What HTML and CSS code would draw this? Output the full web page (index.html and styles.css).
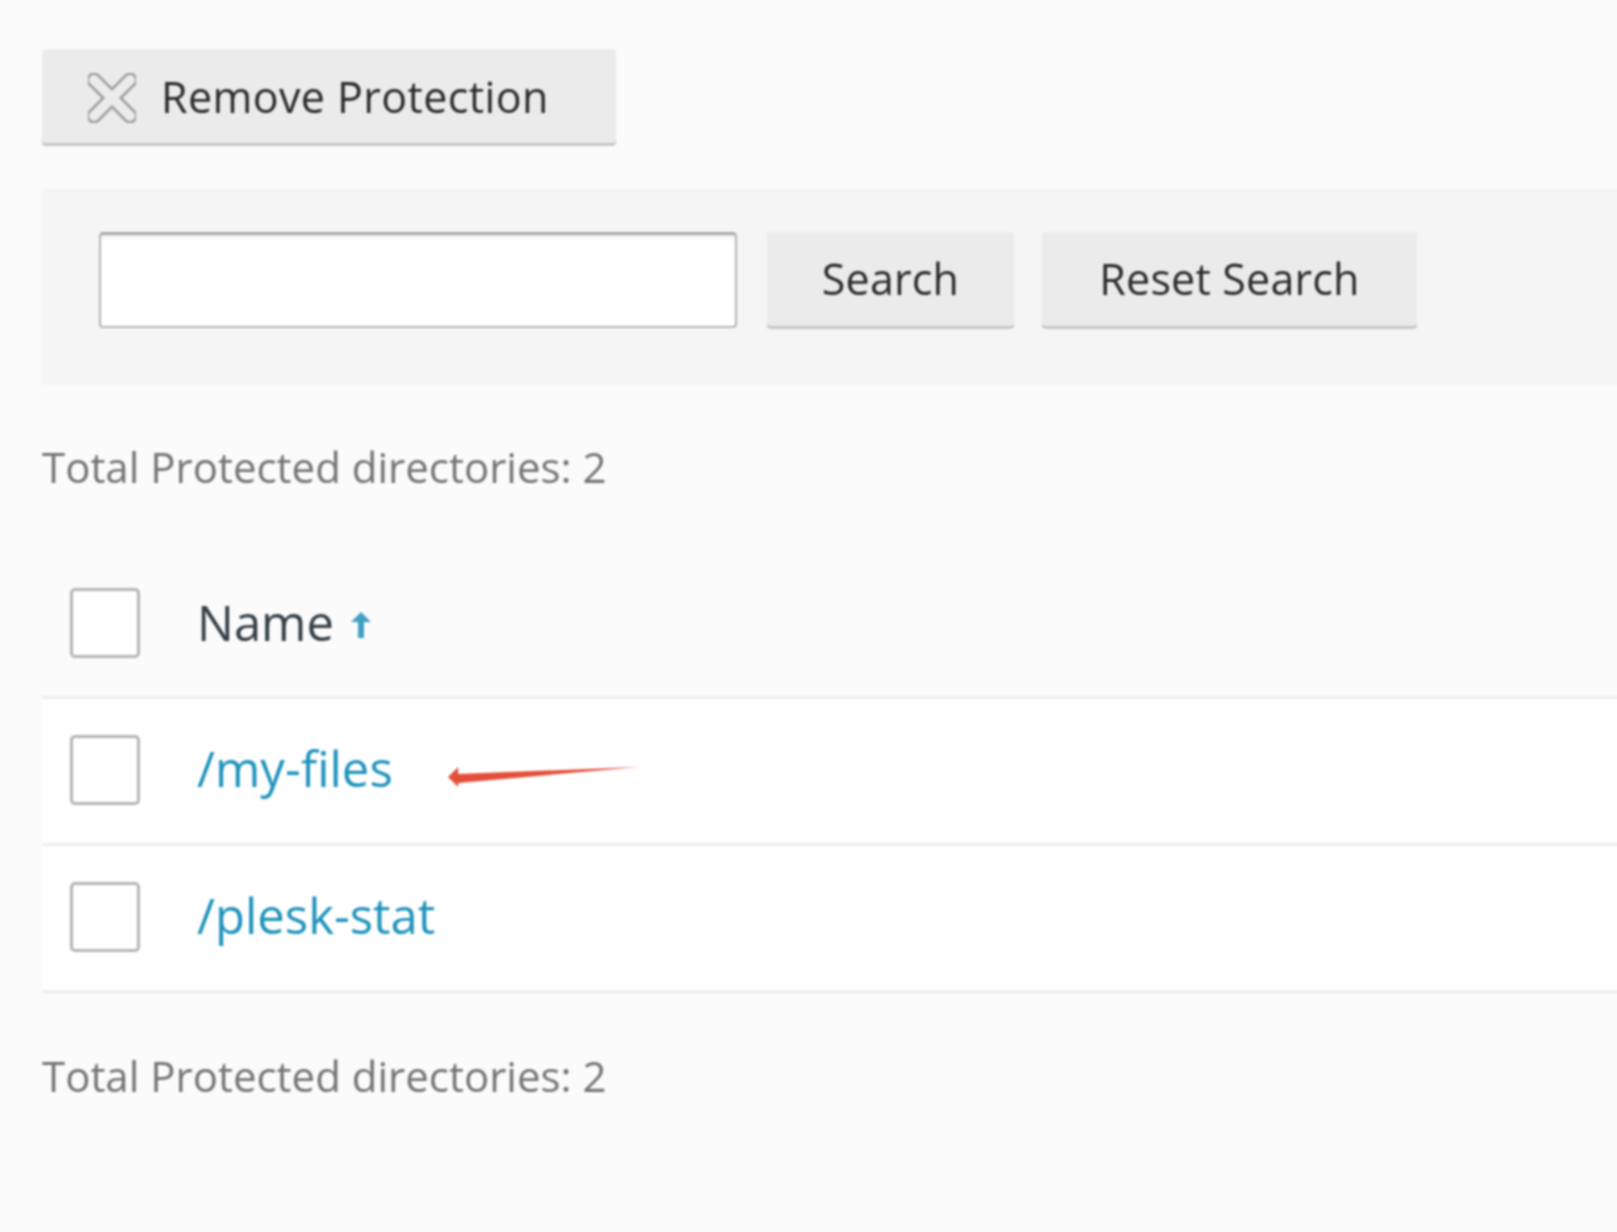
FILE: index.html
```html
<!DOCTYPE html>
<html lang="en">
<head>
  <meta charset="UTF-8" />
  <title>Protected directories</title>
  <link rel="stylesheet" href="styles.css">
</head>
<body>
  <div class="page">
    <div class="toolbar">
      <button class="btn btn-remove">
        <svg class="icon-remove" viewBox="0 0 48 50" width="48" height="50">
          <path class="cross-outer" d="M6 7 L42 43 M42 7 L6 43" />
          <path class="cross-inner" d="M6 7 L42 43 M42 7 L6 43" />
        </svg>
        Remove Protection
      </button>
    </div>

    <div class="search-panel">
      <input type="text" class="search-input" />
      <button class="btn btn-search">Search</button>
      <button class="btn btn-reset">Reset Search</button>
    </div>

    <div class="total total-top">Total Protected directories: 2</div>

    <div class="list">
      <div class="row row-head">
        <span class="check"></span>
        <span class="head-name">Name</span>
        <svg class="sort-arrow" viewBox="0 0 20 28" width="20" height="28">
          <path d="M10 1 L20 11 H13 V27 H7 V11 H0 Z" />
        </svg>
      </div>
      <div class="row row-item">
        <span class="check"></span>
        <a class="dir-link" href="#">/my-files</a>
        <svg class="red-arrow" viewBox="0 0 188 20" width="191" height="20" preserveAspectRatio="none">
          <path d="M0 10 L10 0 L10 7 L188 0 L10 16 L10 20 Z" />
        </svg>
      </div>
      <div class="row row-item">
        <span class="check"></span>
        <a class="dir-link" href="#">/plesk-stat</a>
      </div>
    </div>

    <div class="total total-bottom">Total Protected directories: 2</div>
  </div>
</body>
</html>
```

FILE: styles.css
```css
html, body {
  margin: 0;
  padding: 0;
  height: 100%;
  background: #fbfbfb;
  font-family: "Open Sans", sans-serif;
  overflow: hidden;
}

.page {
  padding: 49px 0 0 42px;
  margin-right: -10px;
  filter: blur(0.9px);
}

.toolbar {
  margin-bottom: 46px;
}

.btn {
  font-family: "Open Sans", sans-serif;
  font-size: 43px;
  font-weight: 500;
  letter-spacing: 0.2px;
  color: #2b2b2b;
  background: #ebebeb;
  border: none;
  border-radius: 4px;
  box-shadow: 0 3px 0 #c6c6c6;
  height: 94px;
  padding: 0;
  margin-bottom: 3px;
}

.btn-remove {
  display: flex;
  align-items: center;
  width: 574px;
  padding-left: 46px;
  gap: 25px;
  letter-spacing: 0.4px;
}

.icon-remove {
  margin-top: 4px;
}

.cross-outer,
.cross-inner {
  fill: none;
  stroke-linecap: round;
}

.cross-outer {
  stroke: #9c9c9c;
  stroke-width: 15;
}

.cross-inner {
  stroke: #ebebeb;
  stroke-width: 10;
}

.search-panel {
  display: flex;
  align-items: flex-start;
  height: 110px;
  padding: 43px 57px;
  background: #f5f5f5;
  border-radius: 4px 0 0 4px;
}

.search-input {
  box-sizing: border-box;
  width: 638px;
  height: 96px;
  background: #fff;
  border: 2px solid #b5b5b5;
  border-top: 3px solid #aaa;
  border-radius: 4px;
  box-shadow: inset 0 5px 4px -2px #eee;
  margin-right: 30px;
}

.btn-search {
  width: 247px;
  margin-right: 28px;
  padding-bottom: 2px;
}

.btn-reset {
  width: 375px;
  padding-bottom: 2px;
}

.total {
  font-size: 42px;
  line-height: 56px;
  color: #747474;
}

.total-top {
  margin-top: 54px;
  margin-bottom: 57px;
}

.total-bottom {
  margin-top: 55px;
}

.row {
  display: flex;
  align-items: center;
  box-sizing: border-box;
  height: 147px;
  padding-left: 28px;
  border-bottom: 3px solid #eeeeee;
  font-size: 49px;
}

.row-item {
  position: relative;
  background: #fff;
}

.check {
  box-sizing: border-box;
  flex: none;
  width: 70px;
  height: 70px;
  margin-right: 57px;
  margin-top: -3px;
  background: #fff;
  border: 3px solid #b5b5b5;
  border-radius: 5px;
}

.head-name {
  color: #333e46;
  margin-bottom: 4px;
}

.sort-arrow {
  margin-left: 17px;
  margin-top: 2px;
}

.sort-arrow path {
  fill: #3f9fc4;
}

.dir-link {
  color: #1f93bb;
  text-decoration: none;
  margin-bottom: 6px;
}

.red-arrow {
  position: absolute;
  left: 406px;
  top: 68px;
}

.red-arrow path {
  fill: #e34f3a;
}
```
